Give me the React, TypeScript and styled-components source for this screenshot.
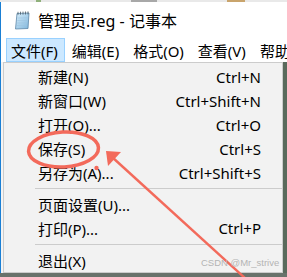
import React from "react";
import styled, { createGlobalStyle } from "styled-components";

const Global = createGlobalStyle`
  html, body { margin: 0; padding: 0; }
  body {
    width: 287px; height: 277px; overflow: hidden;
    background: #5f6b62;
    font-family: "Noto Sans", "Noto Sans CJK SC", sans-serif;
  }
`;

const Window = styled.div`
  position: relative;
  width: 287px;
  height: 277px;
  display: flex;
  flex-direction: column;
  overflow: hidden;
`;

const TopStrip = styled.div`
  height: 2px;
  display: flex;
  background: #e9e9e9;
`;

const StripSeg = styled.div<{ $w: number; $c: string }>`
  width: ${(p) => p.$w}px;
  background: ${(p) => p.$c};
`;

const TitleBar = styled.div`
  height: 36px;
  display: flex;
  align-items: center;
  gap: 6px;
  padding-left: 12px;
  background: #fff;
  border-left: 1px solid #1a7fd4;
`;

const TitleText = styled.span`
  font-size: 16px;
  color: #000;
  line-height: 1;
  margin-top: 2px;
`;

const MenuBar = styled.div`
  height: 24px;
  display: flex;
  align-items: stretch;
  padding-left: 5px;
  gap: 2px;
  background: #fff;
  border-left: 1px solid #1a7fd4;
`;

const MenuItem = styled.div<{ $active?: boolean }>`
  display: flex;
  align-items: center;
  padding: 0 6px 0 4px;
  font-size: 15px;
  color: #000;
  white-space: nowrap;
  box-sizing: border-box;
  background: ${(p) => (p.$active ? "#cce8ff" : "transparent")};
  border: 1px solid ${(p) => (p.$active ? "#99d1ff" : "transparent")};
`;

const Body = styled.div`
  flex: 1;
  display: flex;
  flex-direction: column;
`;

const Row = styled.div`
  height: 211px;
  display: flex;
`;

const LeftGutter = styled.div`
  width: 2px;
  background: #f4f4f4;
  border-left: 1px solid #1a7fd4;
`;

const RightStrip = styled.div`
  flex: 1;
  background: #5a6a5c;
`;

const BottomStrip = styled.div`
  flex: 1;
  background: #69726b;
`;

const Dropdown = styled.div`
  width: 280px;
  box-sizing: border-box;
  background: #f2f2f2;
  border: 1px solid #cccccc;
  padding: 2px 0 0;
  display: flex;
  flex-direction: column;
`;

const DropItem = styled.div`
  height: 24px;
  display: flex;
  align-items: center;
  justify-content: space-between;
  padding: 0 21px 0 34px;
  font-size: 15px;
  color: #000;
  white-space: nowrap;
`;

const Shortcut = styled.span`
  font-size: 15px;
`;

const Separator = styled.div`
  height: 8px;
  display: flex;
  align-items: center;
  padding-left: 31px;
  &::after {
    content: "";
    flex: 1;
    height: 1px;
    background: #cccccc;
  }
`;

const Overlay = styled.svg`
  position: absolute;
  left: 0;
  top: 0;
  pointer-events: none;
`;

const Watermark = styled.div`
  position: absolute;
  left: 201px;
  top: 257px;
  font-family: "Liberation Sans", Arial, sans-serif;
  font-size: 9.5px;
  line-height: 12px;
  color: #b4b4b4;
`;

const NotepadIcon = () => (
  <svg width="19" height="19" viewBox="0 0 19 19">
    <defs>
      <linearGradient id="pg" x1="0" y1="0" x2="1" y2="1">
        <stop offset="0" stopColor="#d8eefb" />
        <stop offset="1" stopColor="#7fb6dc" />
      </linearGradient>
    </defs>
    <path d="M4 2.5 L16 2 L15 17.5 L2.5 18 Z" fill="url(#pg)" stroke="#5d87a8" strokeWidth="0.8" />
    <g stroke="#4a5a66" strokeWidth="0.8">
      <line x1="5" y1="0.8" x2="5" y2="3.8" />
      <line x1="7.5" y1="0.7" x2="7.5" y2="3.7" />
      <line x1="10" y1="0.6" x2="10" y2="3.6" />
      <line x1="12.5" y1="0.5" x2="12.5" y2="3.5" />
      <line x1="15" y1="0.4" x2="15" y2="3.4" />
    </g>
    <g stroke="#9cc3df" strokeWidth="0.6">
      <line x1="4.5" y1="7" x2="14.5" y2="6.8" />
      <line x1="4.3" y1="9.5" x2="14.3" y2="9.3" />
      <line x1="4.1" y1="12" x2="14.1" y2="11.8" />
      <line x1="3.9" y1="14.5" x2="13.9" y2="14.3" />
    </g>
  </svg>
);

type Entry = { label: string; key?: string } | "sep";

const entries: Entry[] = [
  { label: "新建(N)", key: "Ctrl+N" },
  { label: "新窗口(W)", key: "Ctrl+Shift+N" },
  { label: "打开(O)...", key: "Ctrl+O" },
  { label: "保存(S)", key: "Ctrl+S" },
  { label: "另存为(A)...", key: "Ctrl+Shift+S" },
  "sep",
  { label: "页面设置(U)..." },
  { label: "打印(P)...", key: "Ctrl+P" },
  "sep",
  { label: "退出(X)" },
];

const menus = ["文件(F)", "编辑(E)", "格式(O)", "查看(V)", "帮助(H)"];

export default function App() {
  return (
    <>
      <Global />
      <Window>
        <TopStrip>
          <StripSeg $w={36} $c="#e9e9e9" />
          <StripSeg $w={5} $c="#8fb07a" />
          <StripSeg $w={90} $c="#e9e9e9" />
          <StripSeg $w={26} $c="#a8a8a8" />
          <StripSeg $w={70} $c="#e9e9e9" />
          <StripSeg $w={18} $c="#c9a46c" />
          <StripSeg $w={42} $c="#e9e9e9" />
        </TopStrip>
        <TitleBar>
          <NotepadIcon />
          <TitleText>管理员.reg - 记事本</TitleText>
        </TitleBar>
        <MenuBar>
          {menus.map((m, i) => (
            <MenuItem key={m} $active={i === 0}>
              {m}
            </MenuItem>
          ))}
        </MenuBar>
        <Body>
          <Row>
            <LeftGutter />
            <Dropdown>
              {entries.map((e, i) =>
                e === "sep" ? (
                  <Separator key={i} />
                ) : (
                  <DropItem key={i}>
                    <span>{e.label}</span>
                    {e.key && <Shortcut>{e.key}</Shortcut>}
                  </DropItem>
                )
              )}
            </Dropdown>
            <RightStrip />
          </Row>
          <BottomStrip />
        </Body>
        <Overlay width="287" height="277" viewBox="0 0 287 277">
          <ellipse cx="63.5" cy="149.5" rx="35" ry="17.5" fill="none" stroke="#f36a5b" strokeWidth="3.5" transform="rotate(-3 63.5 149.5)" />
          <circle cx="96.5" cy="168" r="2.2" fill="#f36a5b" />
          <line x1="112" y1="157" x2="246" y2="279" stroke="#f36a5b" strokeWidth="2.4" />
          <polygon points="106,151 121,152 108,166" fill="#f36a5b" />
        </Overlay>
        <Watermark>CSDN @Mr_strive</Watermark>
      </Window>
    </>
  );
}
